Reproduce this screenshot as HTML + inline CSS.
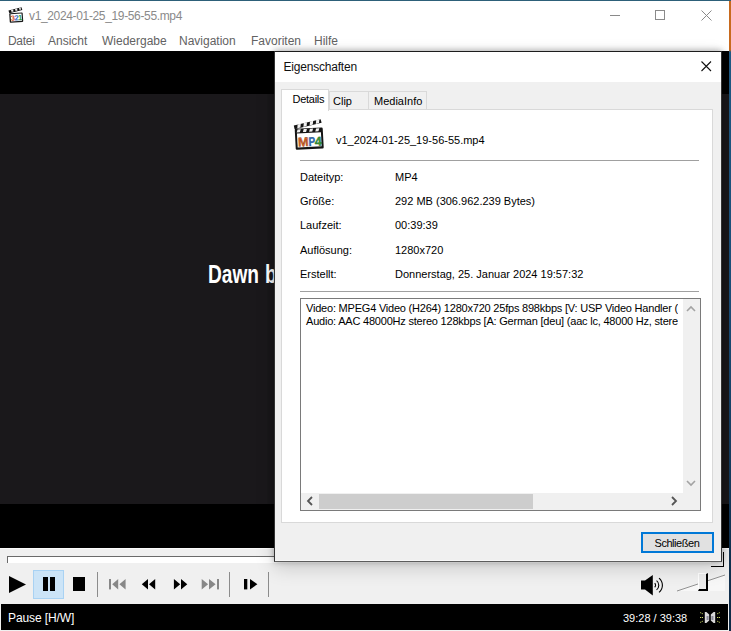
<!DOCTYPE html>
<html><head><meta charset="utf-8">
<style>
*{margin:0;padding:0;box-sizing:border-box}
html,body{width:731px;height:631px;overflow:hidden;background:#1f5b86;font-family:"Liberation Sans",sans-serif}
.a{position:absolute}
.t{position:absolute;white-space:pre;line-height:1}
#desk-top{left:0;top:0;width:731px;height:1px;background:#2d6079}
#desk-r{left:729px;top:0;width:2px;height:631px;background:linear-gradient(#c86a1e 0,#c86a1e 50px,#1f5b86 52px,#1a4f7a 300px,#0f2a45 631px)}
#win{left:0;top:0;width:729px;height:631px;background:#f0f0f0;overflow:hidden}
</style></head><body>
<div class="a" id="desk-r"></div>
<div class="a" id="win">
  <div class="a" style="left:0;top:0;width:729px;height:51px;background:#fff"></div>
  <!-- title bar -->
  <svg class="a" style="left:7px;top:5px" width="18" height="19" viewBox="0 0 18 19">
    <path d="M1.5 5.5 L14.5 2.2 L15.3 5 L2.3 8.3 Z" fill="#111"/>
    <path d="M4 5 L6 4.5 L6.6 6.6 L4.6 7.1 Z M8 4 L10 3.5 L10.6 5.6 L8.6 6.1 Z M12 3 L13.5 2.6 L14.1 4.6 L12.6 5 Z" fill="#eee"/>
    <g transform="rotate(-4 9 13)">
      <rect x="2.5" y="7.8" width="13.5" height="9.6" rx="0.8" fill="#1a1a1a"/>
      <rect x="3.8" y="9" width="11" height="7.2" fill="#fff"/>
      <text x="3.9" y="15.4" font-size="7.5" font-weight="bold" font-family="Liberation Sans" fill="#d2522a">3</text>
      <text x="7.5" y="15.4" font-size="7.5" font-weight="bold" font-family="Liberation Sans" fill="#2d6ec8">2</text>
      <text x="11.2" y="15.4" font-size="7.5" font-weight="bold" font-family="Liberation Sans" fill="#2f9a3a">1</text>
    </g>
  </svg>
  <div class="t" style="left:29px;top:9.5px;font-size:12px;color:#8a8a8a;letter-spacing:-0.35px">v1_2024-01-25_19-56-55.mp4</div>
  <div class="a" style="left:610px;top:15px;width:10px;height:1px;background:#8a8a8a"></div>
  <div class="a" style="left:655px;top:10px;width:10px;height:10px;border:1px solid #8a8a8a"></div>
  <svg class="a" style="left:701px;top:10px" width="11" height="11" viewBox="0 0 11 11"><path d="M0.5 0.5 L10.5 10.5 M10.5 0.5 L0.5 10.5" stroke="#8a8a8a" stroke-width="1"/></svg>
  <!-- menu -->
  <div class="t" style="left:8px;top:35px;font-size:12px;color:#626262;letter-spacing:-0.3px">Datei</div>
  <div class="t" style="left:48px;top:35px;font-size:12px;color:#626262">Ansicht</div>
  <div class="t" style="left:102px;top:35px;font-size:12px;color:#626262">Wiedergabe</div>
  <div class="t" style="left:179px;top:35px;font-size:12px;color:#626262">Navigation</div>
  <div class="t" style="left:251px;top:35px;font-size:12px;color:#626262">Favoriten</div>
  <div class="t" style="left:314px;top:35px;font-size:12px;color:#626262">Hilfe</div>
  <!-- video region -->
  <div class="a" style="left:0;top:51px;width:729px;height:43px;background:#000"></div>
  <div class="a" style="left:0;top:94px;width:729px;height:410px;background:#1a181b"></div>
  <div class="a" style="left:0;top:504px;width:729px;height:44px;background:#000"></div>
  <div class="t" style="left:207.5px;top:262px;font-size:25px;font-weight:bold;color:#fff;transform:scaleX(0.765);transform-origin:0 0;word-spacing:1px">Dawn b</div>
  <!-- controls -->
  <div class="a" style="left:0;top:548px;width:729px;height:55px;background:#f0f0f0"></div>
  <div class="a" style="left:0;top:548px;width:729px;height:1px;background:#fbfbfb"></div>
  <div class="a" style="left:7px;top:556px;width:716px;height:7px;background:#fff;border-top:1px solid #6a6a6a;border-left:1px solid #6a6a6a"></div>
  <div class="a" style="left:711px;top:552px;width:13px;height:15px;background:#f0f0f0;border-right:1px solid #000;border-bottom:1px solid #000"></div>

  <!-- control buttons -->
  <svg class="a" style="left:9px;top:576px" width="17" height="17" viewBox="0 0 17 17"><path d="M0 0 L17 8.5 L0 17 Z" fill="#000"/></svg>
  <div class="a" style="left:33px;top:570px;width:31px;height:29px;background:#cce4f7;border:1px solid #a9d2f3"></div>
  <div class="a" style="left:43px;top:577px;width:5px;height:14px;background:#000"></div>
  <div class="a" style="left:50px;top:577px;width:5px;height:14px;background:#000"></div>
  <div class="a" style="left:73px;top:577px;width:12px;height:14px;background:#000"></div>
  <div class="a" style="left:97px;top:572px;width:1px;height:25px;background:#8c8c8c"></div>
  <svg class="a" style="left:100px;top:570px" width="170" height="30" viewBox="100 570 170 30">
    <rect x="109" y="579" width="2" height="10.4" fill="#878787"/>
    <path d="M112.2 584.2 L118.2 579 V589.4 Z M119.4 584.2 L125.6 579 V589.4 Z" fill="#878787"/>
    <path d="M141.8 584.2 L148 579 V589.4 Z M149 584.2 L155.2 579 V589.4 Z" fill="#000"/>
    <path d="M173.9 579 L180.2 584.2 L173.9 589.4 Z M181 579 L187.3 584.2 L181 589.4 Z" fill="#000"/>
    <path d="M201.7 579 L208.1 584.2 L201.7 589.4 Z M209 579 L215.6 584.2 L209 589.4 Z" fill="#878787"/>
    <rect x="217" y="579" width="2" height="10.4" fill="#878787"/>
    <rect x="244" y="579" width="3.3" height="10.4" fill="#000"/>
    <path d="M250 579 L257.4 584.2 L250 589.4 Z" fill="#000"/>
  </svg>
  <div class="a" style="left:229px;top:572px;width:1px;height:25px;background:#8c8c8c"></div>
  <div class="a" style="left:268px;top:572px;width:1px;height:25px;background:#8c8c8c"></div>
  <!-- volume -->
  <svg class="a" style="left:640px;top:575px" width="24" height="21" viewBox="0 0 24 21"><path d="M1 5.5 H5 L12.8 0 V20.5 L5 14.5 H1 Z" fill="#000"/><path d="M14.67 8.26 A2.6 2.6 0 0 1 14.67 12.24 M16.57 5.68 A5.8 5.8 0 0 1 16.57 14.82 M19.04 3.05 A9.4 9.4 0 0 1 19.04 17.45" fill="none" stroke="#000" stroke-width="1.1"/></svg>
  <svg class="a" style="left:676px;top:573px" width="50" height="20" viewBox="0 0 50 20"><path d="M1 18 L49 2 L49 18 Z" fill="#f7f7f7"/><path d="M1 18 L49 2" stroke="#777" stroke-width="0.8"/></svg>
  <div class="a" style="left:698px;top:573px;width:10px;height:18px;background:#ececec;border-right:2px solid #000;border-bottom:2px solid #000;border-top:1px solid #fff;border-left:1px solid #fff"></div>
  <!-- status -->
  <div class="a" style="left:1px;top:604px;width:727px;height:26px;background:#000"></div>
  <div class="t" style="left:8px;top:612px;font-size:12px;color:#fff;letter-spacing:-0.1px">Pause [H/W]</div>
  <div class="t" style="left:623px;top:612.7px;font-size:11px;color:#fff">39:28 / 39:38</div>
  <svg class="a" style="left:695px;top:606px" width="30" height="22" viewBox="695 606 30 22">
    <path d="M700.2 612.6 L702.8 613.8 M700 617.5 H703 M700.2 622.4 L702.8 621.2 M719.8 612.6 L717.2 613.8 M720 617.5 H717 M719.8 622.4 L717.2 621.2" stroke="#c9d766" stroke-width="1" stroke-dasharray="1.3 0.7"/>
    <path d="M704.8 612 H706.4 L709.2 614.6 V620.6 L706.4 623 H704.8 Z" fill="#d8d8d8"/>
    <path d="M715.2 612 H713.6 L710.8 614.6 V620.6 L713.6 623 H715.2 Z" fill="#d8d8d8"/>
    <rect x="706.6" y="616" width="2" height="4" fill="#8a8a98"/>
    <rect x="711.4" y="616" width="2" height="4" fill="#8a8a98"/>
  </svg>
</div>

<div class="a" id="desk-top"></div>
<!-- dialog -->
<div class="a" id="dlg" style="left:274px;top:51px;width:448px;height:511px;background:#f0f0f0;border:1px solid #333;border-top-color:#1c1c1c;border-bottom-color:#5c5c5c;box-shadow:0 0 6px rgba(0,0,0,0.22),0 6px 18px rgba(0,0,0,0.16),0 -2px 6px rgba(0,0,0,0.1)">
  <div class="a" style="left:0;top:0;width:446px;height:30px;background:#fff"></div>
  <div class="t" style="left:8.5px;top:9.3px;font-size:12px;color:#111;letter-spacing:-0.2px">Eigenschaften</div>
  
  <!-- tabs (coords relative to dialog inner: page x-275, y-52) -->
  <div class="a" style="left:54px;top:39px;width:40px;height:19px;background:#f0f0f0;border:1px solid #d9d9d9;border-bottom:none"></div>
  <div class="a" style="left:93px;top:39px;width:59px;height:19px;background:#f0f0f0;border:1px solid #d9d9d9;border-bottom:none"></div>
  <div class="a" style="left:6px;top:57px;width:432px;height:414px;background:#fff;border:1px solid #d9d9d9"></div>
  <div class="a" style="left:6px;top:37px;width:48px;height:22px;background:#fff;border:1px solid #d9d9d9;border-bottom:none"></div>
  <div class="t" style="left:17.6px;top:42.2px;font-size:11px;color:#000;letter-spacing:-0.3px">Details</div>
  <div class="t" style="left:58px;top:44px;font-size:11px;color:#000">Clip</div>
  <div class="t" style="left:99px;top:44px;font-size:11px;color:#000">MediaInfo</div>
  <!-- mp4 icon -->
  <svg class="a" style="left:13px;top:62px" width="42" height="40" viewBox="288 114 42 40">
    <path d="M293.8 125.6 L320.6 119.2 L321.6 122.8 L294.6 129.2 Z" fill="#141414"/>
    <path d="M297.6 124.5 L300.8 123.7 L300.4 127.6 L297.3 128.3 Z M303.8 123 L307 122.2 L306.6 126.1 L303.4 126.9 Z M310 121.5 L313.2 120.7 L312.8 124.6 L309.6 125.4 Z M316.2 120 L319.4 119.2 L319 123.1 L315.8 123.9 Z" fill="#f0f0f0"/>
    <g transform="rotate(-3 309 138)">
      <rect x="295.2" y="128.2" width="28" height="21" rx="1.2" fill="#141414"/>
      <rect x="297.2" y="133" width="24" height="14" fill="#fff"/>
      <path d="M298 128.8 H301.2 L300.2 131.8 H297 Z M304.2 128.8 H307.4 L306.4 131.8 H303.2 Z M310.4 128.8 H313.6 L312.6 131.8 H309.4 Z M316.6 128.8 H319.8 L318.8 131.8 H315.6 Z" fill="#f0f0f0"/>
      <text x="297.8" y="146" font-size="12.5" font-weight="bold" font-family="Liberation Sans" fill="#df6428" stroke="#7a3510" stroke-width="0.4" textLength="10.5" lengthAdjust="spacingAndGlyphs">M</text>
      <text x="308.3" y="146" font-size="12.5" font-weight="bold" font-family="Liberation Sans" fill="#2f76c8" stroke="#173f70" stroke-width="0.4" textLength="6.6" lengthAdjust="spacingAndGlyphs">P</text>
      <text x="314.6" y="146" font-size="12.5" font-weight="bold" font-family="Liberation Sans" fill="#38a038" stroke="#1b5a1b" stroke-width="0.4" textLength="7" lengthAdjust="spacingAndGlyphs">4</text>
    </g>
  </svg>
  <div class="t" style="left:61px;top:83px;font-size:11px;color:#000">v1_2024-01-25_19-56-55.mp4</div>
  <div class="a" style="left:25px;top:108px;width:399px;height:1px;background:#a0a0a0"></div>
  <div class="t" style="left:25px;top:120px;font-size:11px;color:#000">Dateityp:</div>
  <div class="t" style="left:120px;top:120px;font-size:11px;color:#000">MP4</div>
  <div class="t" style="left:25px;top:144px;font-size:11px;color:#000">Größe:</div>
  <div class="t" style="left:120px;top:144px;font-size:11px;color:#000">292 MB (306.962.239 Bytes)</div>
  <div class="t" style="left:25px;top:168px;font-size:11px;color:#000">Laufzeit:</div>
  <div class="t" style="left:120px;top:168px;font-size:11px;color:#000">00:39:39</div>
  <div class="t" style="left:25px;top:193px;font-size:11px;color:#000">Auflösung:</div>
  <div class="t" style="left:120px;top:193px;font-size:11px;color:#000">1280x720</div>
  <div class="t" style="left:25px;top:217px;font-size:11px;color:#000">Erstellt:</div>
  <div class="t" style="left:120px;top:217px;font-size:11px;color:#000">Donnerstag, 25. Januar 2024 19:57:32</div>
  <div class="a" style="left:25px;top:239px;width:399px;height:1px;background:#a0a0a0"></div>
  <!-- edit box -->
  <div class="a" style="left:25px;top:246px;width:401px;height:213px;background:#fff;border:1px solid #7a7a7a;overflow:hidden">
    <div class="a" style="left:0;top:0;width:377px;height:194px;overflow:hidden">
      <div class="t" style="left:5px;top:3.2px;font-size:11px;line-height:12.7px;letter-spacing:-0.21px;color:#000">Video: MPEG4 Video (H264) 1280x720 25fps 898kbps [V: USP Video Handler (h
Audio: AAC 48000Hz stereo 128kbps [A: German [deu] (aac lc, 48000 Hz, stereo)</div>
    </div>
    <div class="a" style="left:382px;top:0;width:17px;height:194px;background:#f0f0f0"></div>
    <div class="a" style="left:0;top:194px;width:399px;height:17px;background:#f0f0f0"></div>
    <div class="a" style="left:18px;top:195px;width:214px;height:15px;background:#cdcdcd"></div>
    <svg class="a" style="left:385px;top:6px" width="10" height="8" viewBox="0 0 10 8"><path d="M1 6 L5 2 L9 6" fill="none" stroke="#a3a3a3" stroke-width="1.6"/></svg>
    <svg class="a" style="left:385px;top:180px" width="10" height="8" viewBox="0 0 10 8"><path d="M1 2 L5 6 L9 2" fill="none" stroke="#a3a3a3" stroke-width="1.6"/></svg>
    <svg class="a" style="left:5px;top:197px" width="8" height="10" viewBox="0 0 8 10"><path d="M6 1 L2 5 L6 9" fill="none" stroke="#555" stroke-width="1.8"/></svg>
    <svg class="a" style="left:369px;top:197px" width="8" height="10" viewBox="0 0 8 10"><path d="M2 1 L6 5 L2 9" fill="none" stroke="#555" stroke-width="1.8"/></svg>
  </div>
  <div class="a" style="left:0;top:508px;width:446px;height:1px;background:#f8f8f8"></div>
  <!-- button -->
  <div class="a" style="left:366px;top:480px;width:73px;height:21px;background:#e1e1e1;border:2px solid #0078d7"></div>
  <div class="t" style="left:379.5px;top:486px;font-size:11px;letter-spacing:-0.45px;color:#000">Schließen</div>
  <svg class="a" style="left:426px;top:9px" width="11" height="11" viewBox="0 0 11 11"><path d="M0.5 0.5 L10 10 M10 0.5 L0.5 10" stroke="#111" stroke-width="1.1"/></svg>
</div>
</body></html>
